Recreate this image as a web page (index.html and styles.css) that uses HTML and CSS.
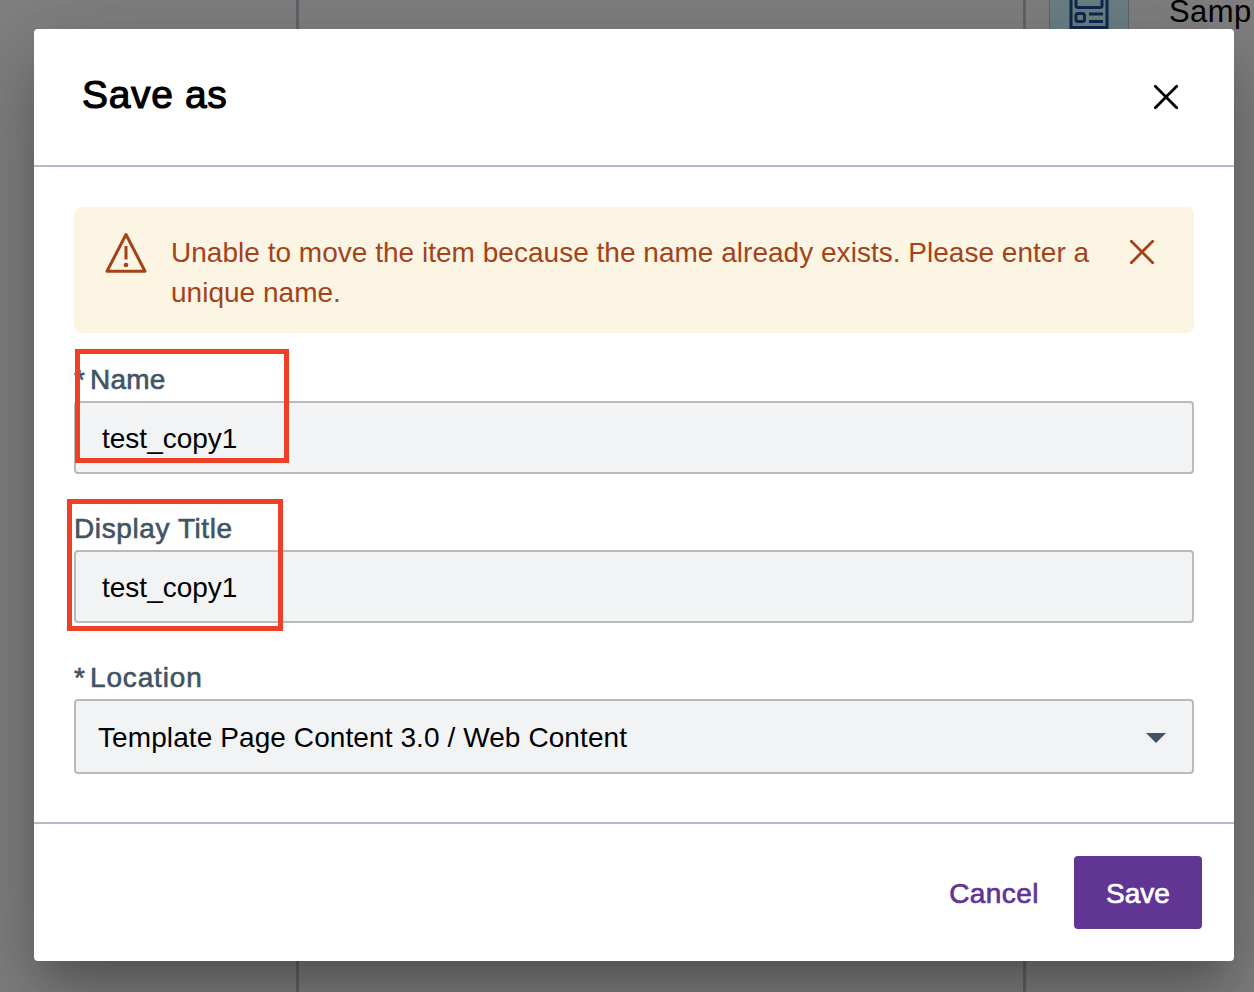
FILE: index.html
```html
<!DOCTYPE html>
<html lang="en">
<head>
<meta charset="utf-8">
<title>Save as</title>
<link rel="stylesheet" href="styles.css">
</head>
<body>
<div class="page">
  <div class="column column-nav"></div>
  <div class="column column-main"></div>
  <div class="column-side">
    <div class="thumb">
      <svg width="40" height="40" viewBox="0 0 40 40" fill="none" stroke="#0f2a50" stroke-width="3">
        <rect x="2" y="-8" width="36" height="45.500"/>
        <rect x="7" y="6" width="26" height="11.500" rx="2"/>
        <rect x="7" y="23.500" width="8.500" height="8" rx="2"/>
        <path d="M20 24h14M20 31.500h14"/>
      </svg>
    </div>
    <span class="side-text">Samp</span>
  </div>
</div>
<div class="overlay">
  <section class="dialog">
    <header class="dialog-header">
      <h1 class="title">Save as</h1>
      <svg class="close" width="26" height="26" viewBox="0 0 26 26"><path d="M2.300 2.300L23.700 23.700M23.700 2.300L2.300 23.700"/></svg>
    </header>
    <div class="dialog-body">
      <div class="alert">
        <svg class="warn" width="42" height="42" viewBox="0 0 42 42">
          <path d="M21 2.500L40 39.200H2Z" fill="none" stroke-width="3" stroke-linejoin="round"/>
          <path d="M21 14v13.500" stroke-width="3"/>
          <circle cx="21" cy="33" r="2.300" stroke="none"/>
        </svg>
        <p class="alert-text">Unable to move the item because the name already exists. Please enter a<br>unique name.</p>
        <svg class="alert-close" width="26" height="26" viewBox="0 0 26 26"><path d="M2.300 2.300L23.700 23.700M23.700 2.300L2.300 23.700"/></svg>
      </div>
      <div class="field field-name">
        <label class="label"><span class="star">*</span><span class="label-name">Name</span></label>
        <div class="input"><span>test_copy1</span></div>
        <div class="mark mark-name"></div>
      </div>
      <div class="field">
        <label class="label"><span class="label-display">Display Title</span></label>
        <div class="input"><span>test_copy1</span></div>
        <div class="mark mark-title"></div>
      </div>
      <div class="field">
        <label class="label"><span class="star">*</span><span class="label-location">Location</span></label>
        <div class="input select"><span class="path">Template Page Content 3.0 / Web Content</span>
          <svg width="20" height="10" viewBox="0 0 20 10"><path d="M0 0H20L10 10Z" fill="#425363"/></svg>
        </div>
      </div>
    </div>
    <footer class="dialog-footer">
      <button class="btn btn-text">Cancel</button>
      <button class="btn btn-primary">Save</button>
    </footer>
  </section>
</div>
</body>
</html>
```
FILE: styles.css
```css
* { box-sizing: border-box; }
body {
  margin: 0;
  width: 1254px;
  height: 992px;
  overflow: hidden;
  position: relative;
  font-family: "Liberation Sans", Arial, sans-serif;
  font-size: 28px;
  color: #000;
}
.page {
  display: grid;
  grid-template-columns: 299px 727px 1fr;
  height: 992px;
  background: #808080;
}
.column { border-right: 3px solid #5f656b; }
.column-side { display: flex; align-items: flex-start; padding-left: 23px; }
.thumb {
  flex: none;
  width: 80px;
  height: 60px;
  margin-top: -20px;
  padding: 10px 0 0 19px;
  background: #6c8085;
  border: 1px solid #596670;
  border-top: 0;
}
.side-text { margin: -5px 0 0 40px; font-size: 31px; line-height: 34px; letter-spacing: 0.4px; white-space: nowrap; }
.overlay { position: absolute; inset: 0; padding: 29px 20px 0 34px; }
.dialog {
  display: flex;
  flex-direction: column;
  height: 932px;
  background: #fff;
  border-radius: 4px;
  box-shadow: 0 22px 30px -14px rgba(0,0,0,.2), 0 48px 76px 6px rgba(0,0,0,.14), 0 18px 92px 16px rgba(0,0,0,.12);
}
.dialog-header {
  display: flex;
  justify-content: space-between;
  align-items: center;
  height: 138px;
  padding: 0 55px 0 48px;
  border-bottom: 2px solid #b0bcc7;
}
.title { margin: 0; padding-bottom: 4px; font-size: 39px; font-weight: 400; line-height: 48px; letter-spacing: 0.65px; -webkit-text-stroke: 1.1px; }
.close path, .alert-close path { stroke: #000; stroke-width: 2.8; stroke-linecap: round; }
.alert-close path { stroke: #a3431a; }
.dialog-body { flex: 1; padding: 40px 40px 0; }
.alert {
  display: flex;
  height: 126px;
  padding: 25px 39px 0 31px;
  background: #fdf5e3;
  border-radius: 7px;
  color: #a3431a;
}
.warn { flex: none; fill: #a3431a; stroke: #a3431a; }
.alert-text { flex: 1; margin: 1px 0 0 24px; line-height: 40px; letter-spacing: 0.02px; white-space: nowrap; }
.alert-close { flex: none; margin-top: 7px; }
.field { position: relative; height: 149px; }
.field-name { margin-top: 17px; }
.label {
  display: flex;
  height: 51px;
  padding-top: 14px;
  line-height: 32px;
  color: #425363;
  -webkit-text-stroke: 0.6px;
}
.star { width: 16px; }
.label-name { letter-spacing: 0.25px; }
.label-display { letter-spacing: 0.6px; }
.label-location { letter-spacing: 0.85px; }
.input {
  display: flex;
  align-items: center;
  height: 73px;
  padding: 2px 0 0 26px;
  background: #f2f3f5;
  border: 2px solid #b9bbbb;
  border-radius: 4px;
}
.select { height: 75px; padding: 2px 26px 0 22px; justify-content: space-between; }
.path { letter-spacing: 0.09px; }
.mark { position: absolute; border: 5px solid #ed4027; }
.mark-name { left: 1px; top: -1px; width: 214px; height: 114px; }
.mark-title { left: -7px; top: 0; width: 216px; height: 132px; }
.dialog-footer {
  display: flex;
  justify-content: flex-end;
  height: 139px;
  padding: 32px 32px 0 0;
  border-top: 2px solid #b0bcc7;
}
.btn { height: 73px; padding: 2px 0 0; border: 0; border-radius: 4px; font: inherit; -webkit-text-stroke: 0.7px; }
.btn-text { width: 160px; background: none; color: #613594; letter-spacing: 0.4px; }
.btn-primary { width: 128px; background: #613594; color: #fff; }
```
